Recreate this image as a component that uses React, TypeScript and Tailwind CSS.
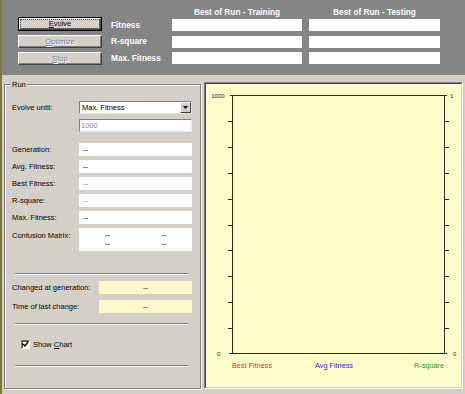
const FONT = "font-['Liberation_Sans',Arial,sans-serif]";

function WinButton({
  first,
  rest,
  primary,
  disabled,
}: {
  first: string;
  rest: string;
  primary?: boolean;
  disabled?: boolean;
}) {
  return (
    <div className={primary ? "h-[14px] w-[84px] border border-black" : "h-[13px] w-[84px]"}>
      <div
        className={
          primary
            ? "h-full w-full bg-[#d4d0c8] border border-t-white border-l-white border-b-[#404040] border-r-[#404040] shadow-[inset_-1px_-1px_0_#808080] flex items-center justify-center outline outline-1 outline-dotted outline-[#444] outline-offset-[-2px]"
            : "h-full w-full bg-[#d4d0c8] border border-t-white border-l-white border-b-[#404040] border-r-[#404040] shadow-[inset_-1px_-1px_0_#808080] flex items-center justify-center"
        }
      >
        <span
          className={
            disabled
              ? "text-[7.5px] leading-none text-[#808080] [text-shadow:1px_1px_0_#fff]"
              : "text-[7.5px] leading-none text-black"
          }
        >
          <span className="underline">{first}</span>
          {rest}
        </span>
      </div>
    </div>
  );
}

function ValueRow({ label, value, dim }: { label: string; value: string; dim?: boolean }) {
  return (
    <div className="flex items-center h-[13px]">
      <div className="w-[67px] text-[7.5px] leading-none text-black">{label}</div>
      <div className="w-[113px] h-[13px] bg-white flex items-center pl-[4px]">
        <span className={dim ? "text-[7.5px] leading-none text-[#7a7a7a]" : "text-[7.5px] leading-none text-black"}>
          {value}
        </span>
      </div>
    </div>
  );
}

function Separator() {
  return <div className="ml-[3px] w-[173px] h-[2px] border-t border-t-[#808080] border-b border-b-white" />;
}

function Chart() {
  const ticks = Array.from({ length: 9 }, (_, i) => 11.5 + (i + 1) * 25.8);
  return (
    <svg width="255" height="303" viewBox="0 0 255 303" className="block">
      <g stroke="#2b2b2b" strokeWidth="1" fill="none" shapeRendering="crispEdges">
        <rect x="26.5" y="11.5" width="212" height="258" />
        <line x1="24" y1="11.5" x2="26.5" y2="11.5" />
        <line x1="238.5" y1="11.5" x2="241" y2="11.5" />
        <line x1="23" y1="269.5" x2="26.5" y2="269.5" />
        <line x1="238.5" y1="269.5" x2="241" y2="269.5" />
        {ticks.map((y) => (
          <g key={y}>
            <line x1="22" y1={Math.round(y) + 0.5} x2="26.5" y2={Math.round(y) + 0.5} />
            <line x1="238.5" y1={Math.round(y) + 0.5} x2="243" y2={Math.round(y) + 0.5} />
          </g>
        ))}
      </g>
      <g fontFamily="'Liberation Sans', Arial, sans-serif" fontSize="6" fill="#222">
        <text x="18.5" y="13.5" textAnchor="end">1000</text>
        <text x="244" y="13.5">1</text>
        <text x="11" y="272">0</text>
        <text x="247" y="272">0</text>
      </g>
      <g fontFamily="'Liberation Sans', Arial, sans-serif" fontSize="7.3">
        <text x="26" y="284" fill="#ff2020">Best Fitness</text>
        <text x="109" y="284" fill="#2020ff">Avg Fitness</text>
        <text x="238" y="284" fill="#1e9a1e" textAnchor="end">R-square</text>
      </g>
    </svg>
  );
}

export default function App() {
  return (
    <div
      className={`w-[465px] h-[394px] bg-[#d4d0c8] border-l-2 border-l-[#7c7c2c] flex flex-col overflow-hidden ${FONT}`}
    >
      {/* top bar */}
      <div className="h-[75px] shrink-0 bg-[#858585] flex">
        <div className="ml-[16px] pt-[17px] flex flex-col gap-[4px] w-[84px]">
          <WinButton first="E" rest="volve" primary />
          <WinButton first="O" rest="ptimize" disabled />
          <WinButton first="S" rest="top" disabled />
        </div>
        <div className="ml-[9px] pt-[6px] flex flex-col">
          <div className="flex h-[12px] mb-[1px] items-center text-white font-bold text-[8.3px] leading-none">
            <div className="w-[61px]" />
            <div className="w-[130px] text-center">Best of Run - Training</div>
            <div className="w-[7px]" />
            <div className="w-[131px] text-center">Best of Run - Testing</div>
          </div>
          <div className="flex flex-col gap-[4.5px]">
            {["Fitness", "R-square", "Max. Fitness"].map((l) => (
              <div key={l} className="flex h-[12px] items-center">
                <div className="w-[61px] text-white font-bold text-[8.3px] leading-none">{l}</div>
                <div className="w-[130px] h-[12px] bg-white" />
                <div className="w-[7px]" />
                <div className="w-[131px] h-[12px] bg-white" />
              </div>
            ))}
          </div>
        </div>
      </div>

      {/* main */}
      <div className="flex items-start pl-[2px]">
        {/* Run group */}
        <div className="relative mt-[9px] w-[197px] h-[305px] border border-[#808080] shadow-[inset_1px_1px_0_#fff,1px_1px_0_#fff]">
          <div className="absolute left-[6px] top-[-5px] px-[1px] bg-[#d4d0c8] text-[7.5px] leading-[9px] text-black">
            Run
          </div>
          <div className="pl-[7px] pt-[16px] flex flex-col">
            <div className="flex items-center h-[13px]">
              <div className="w-[67px] text-[7.5px] leading-none">Evolve until:</div>
              <div className="w-[113px] h-[13px] bg-white border border-t-[#808080] border-l-[#808080] border-b-[#e8e8e8] border-r-[#e8e8e8] flex items-center">
                <span className="flex-1 pl-[2px] text-[7.5px] leading-none">Max. Fitness</span>
                <div className="w-[11px] h-[11px] bg-[#d4d0c8] border border-t-white border-l-white border-b-[#404040] border-r-[#404040] flex items-center justify-center">
                  <svg width="5" height="3" viewBox="0 0 5 3">
                    <path d="M0 0h5L2.5 3z" fill="#000" />
                  </svg>
                </div>
              </div>
            </div>
            <div className="flex items-center h-[13px] mt-[5px]">
              <div className="w-[67px]" />
              <div className="w-[113px] h-[13px] bg-white border border-t-[#808080] border-l-[#808080] border-b-[#e8e8e8] border-r-[#e8e8e8] flex items-center pl-[1px]">
                <span className="text-[7.5px] leading-none text-[#8a8a8a]">1000</span>
              </div>
            </div>

            <div className="mt-[11px] flex flex-col gap-[4px]">
              <ValueRow label="Generation:" value="--" />
              <ValueRow label="Avg. Fitness:" value="--" />
              <ValueRow label="Best Fitness:" value="--" dim />
              <ValueRow label="R-square:" value="--" dim />
              <ValueRow label="Max. Fitness:" value="--" />
              <div className="flex items-start h-[23px]">
                <div className="w-[67px] pt-[4px] text-[7.5px] leading-none">Confusion Matrix:</div>
                <div className="w-[113px] h-[23px] bg-white grid grid-cols-2 grid-rows-2 pt-[2px] pb-[3px] text-[7.5px] leading-none">
                  <span className="flex items-center pl-[26px]">--</span>
                  <span className="flex items-center pl-[26px]">--</span>
                  <span className="flex items-center pl-[26px]">--</span>
                  <span className="flex items-center pl-[26px]">--</span>
                </div>
              </div>
            </div>

            <div className="mt-[22px]">
              <Separator />
            </div>

            <div className="mt-[6px] flex flex-col gap-[6px]">
              {["Changed at generation:", "Time of last change:"].map((l) => (
                <div key={l} className="flex items-center h-[13px]">
                  <div className="w-[87px] text-[7.5px] leading-none">{l}</div>
                  <div className="w-[93px] h-[13px] bg-[#fff8cc] flex items-center justify-center text-[7.5px] leading-none">
                    --
                  </div>
                </div>
              ))}
            </div>

            <div className="mt-[10px]">
              <Separator />
            </div>

            <div className="mt-[15px] flex items-center pl-[9px] h-[9px]">
              <div className="w-[9px] h-[9px] bg-white border border-t-[#808080] border-l-[#808080] border-b-white border-r-white shadow-[inset_1px_1px_0_#404040] flex items-center justify-center">
                <svg width="7" height="7" viewBox="0 0 7 7">
                  <path d="M1 3l2 2 3-4" stroke="#000" strokeWidth="1.4" fill="none" />
                </svg>
              </div>
              <span className="ml-[3px] text-[7.5px] leading-none">
                Show <span className="underline">C</span>hart
              </span>
            </div>

            <div className="mt-[16px]">
              <Separator />
            </div>
          </div>
        </div>

        {/* chart pane */}
        <div className="ml-[3px] mt-[7px] w-[259px] h-[307px] border border-t-[#808080] border-l-[#808080] border-b-white border-r-white">
          <div className="h-full w-full border border-t-[#404040] border-l-[#404040] border-b-[#d4d0c8] border-r-[#d4d0c8] bg-[#ffffcc]">
            <Chart />
          </div>
        </div>
      </div>
    </div>
  );
}
